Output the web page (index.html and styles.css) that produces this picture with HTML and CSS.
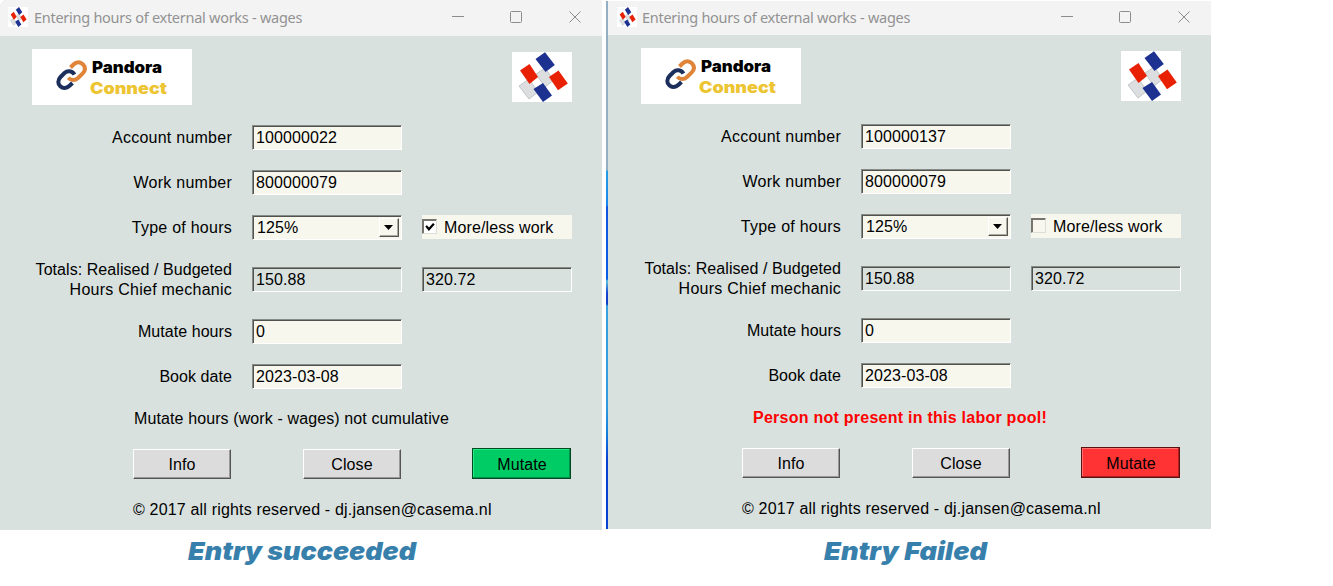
FILE: index.html
```html
<!DOCTYPE html>
<html lang="en">
<head>
<meta charset="utf-8">
<title>Entering hours of external works - wages</title>
<link rel="stylesheet" href="styles.css">
</head>
<body>
<svg class="defs" aria-hidden="true">
  <symbol id="flags" viewBox="0 0 60 50" preserveAspectRatio="none">
    <rect width="60" height="50" fill="#fff"/>
    <g stroke="#b8bcc0" stroke-width=".8">
      <path fill="#dcdee0" d="M7 34L17 27L26 40L17 47Z"/>
      <path fill="#dcdee0" d="M24 22L33 16L42 28L33 35Z"/>
    </g>
    <path fill="#1c3190" d="M23.500 7L33 .3L42.800 13L33.500 20Z"/>
    <path fill="#e82104" d="M8 18.500L17.500 12L26 25L17.500 32Z"/>
    <path fill="#e82104" d="M37 25L46.500 18.500L55.800 31.500L46 38.300Z"/>
    <path fill="#1c3190" d="M21.500 37L31 31L40 43.500L31 50Z"/>
  </symbol>
  <symbol id="chain" viewBox="0 0 50 56">
    <g fill="none" stroke-width="4">
      <path stroke="#df8438" d="M38.500 18.500L41.500 15.500C44.500 12.500 48.500 12.800 51 15.300C53.500 18 53.500 21.500 50.500 24.700L46 29C43 31.700 39 31.800 36.300 28.700" transform="translate(-10)"/>
      <path stroke="#1b2e5c" d="M42.500 25.500C40 21.500 35.500 21.200 32.500 24L28.500 28C25.500 31 25.700 35 28.300 37.300C31 39.800 34.500 39.600 37.500 36.800L40.500 34" transform="translate(-10)"/>
    </g>
  </symbol>
</svg>
<main class="stage">
  <section class="entry">
    <div class="window">
      <header class="titlebar">
        <svg class="app-icon"><use href="#flags"/></svg>
        <span class="title">Entering hours of external works - wages</span>
        <svg class="controls" viewBox="0 0 130 14"><path d="M1 6.500H13M118.500 1.500L129.500 12.500M129.500 1.500L118.500 12.500"/><rect x="59.500" y="1.500" width="11" height="11" rx="1"/></svg>
      </header>
      <form class="body">
        <div class="logos">
          <svg class="pandora" viewBox="0 0 160 56"><use href="#chain" x="10" width="50" height="56"/><text class="brand" x="60" y="24" textLength="70" lengthAdjust="spacingAndGlyphs">Pandora</text><text class="brand gold" x="58" y="45" textLength="77" lengthAdjust="spacingAndGlyphs">Connect</text></svg>
          <svg class="flags"><use href="#flags"/></svg>
        </div>
        <div class="fields">
          <span class="label">Account number</span><span class="field">100000022</span>
          <span class="label">Work number</span><span class="field">800000079</span>
          <span class="label">Type of hours</span>
          <span class="field select">125%<span class="arrow"><svg viewBox="0 0 9 5"><path d="M0 0H9L4.500 5Z"/></svg></span></span>
          <span class="check"><span class="box"><svg viewBox="0 0 9 9"><path d="M1 3.500L3.500 6.500L8 1.500"/></svg></span>More/less work</span>
          <span class="label totals"><span class="tight">Totals: Realised / Budgeted</span><br>Hours Chief mechanic</span><span class="field readonly">150.88</span><span class="field readonly">320.72</span>
          <span class="label tight">Mutate hours</span><span class="field">0</span>
          <span class="label tight">Book date</span><span class="field">2023-03-08</span>
        </div>
        <p class="message">Mutate hours (work - wages) not cumulative</p>
        <div class="buttons"><span class="btn">Info</span><span class="btn">Close</span><span class="btn mutate ok">Mutate</span></div>
        <p class="copyright">© 2017 all rights reserved - dj.jansen@casema.nl</p>
      </form>
    </div>
    <svg class="caption" viewBox="0 0 602 56"><text x="188" y="30" textLength="228" lengthAdjust="spacingAndGlyphs">Entry succeeded</text></svg>
  </section>
  <section class="entry second">
    <div class="window">
      <header class="titlebar">
        <svg class="app-icon"><use href="#flags"/></svg>
        <span class="title">Entering hours of external works - wages</span>
        <svg class="controls" viewBox="0 0 130 14"><path d="M1 6.500H13M118.500 1.500L129.500 12.500M129.500 1.500L118.500 12.500"/><rect x="59.500" y="1.500" width="11" height="11" rx="1"/></svg>
      </header>
      <form class="body">
        <div class="logos">
          <svg class="pandora" viewBox="0 0 160 56"><use href="#chain" x="10" width="50" height="56"/><text class="brand" x="60" y="24" textLength="70" lengthAdjust="spacingAndGlyphs">Pandora</text><text class="brand gold" x="58" y="45" textLength="77" lengthAdjust="spacingAndGlyphs">Connect</text></svg>
          <svg class="flags"><use href="#flags"/></svg>
        </div>
        <div class="fields">
          <span class="label">Account number</span><span class="field">100000137</span>
          <span class="label">Work number</span><span class="field">800000079</span>
          <span class="label">Type of hours</span>
          <span class="field select">125%<span class="arrow"><svg viewBox="0 0 9 5"><path d="M0 0H9L4.500 5Z"/></svg></span></span>
          <span class="check"><span class="box off"></span>More/less work</span>
          <span class="label totals"><span class="tight">Totals: Realised / Budgeted</span><br>Hours Chief mechanic</span><span class="field readonly">150.88</span><span class="field readonly">320.72</span>
          <span class="label tight">Mutate hours</span><span class="field">0</span>
          <span class="label tight">Book date</span><span class="field">2023-03-08</span>
        </div>
        <p class="message error">Person not present in this labor pool!</p>
        <div class="buttons"><span class="btn">Info</span><span class="btn">Close</span><span class="btn mutate fail">Mutate</span></div>
        <p class="copyright">© 2017 all rights reserved - dj.jansen@casema.nl</p>
      </form>
    </div>
    <svg class="caption" viewBox="0 0 602 56"><text x="218" y="31" textLength="163" lengthAdjust="spacingAndGlyphs">Entry Failed</text></svg>
  </section>
</main>
</body>
</html>
```
FILE: styles.css
```css
* { box-sizing: border-box; }
body { margin: 0; background: #fff; font: 16px/20px "Liberation Sans", Arial, sans-serif; color: #000; overflow: hidden; }
p { margin: 0; }
svg { display: block; flex: none; }
.defs { position: absolute; width: 0; height: 0; }
.stage { display: flex; gap: 4px; }
.entry { width: 602px; }
.second { width: 605px; padding-top: 1px; }
.window { height: 530px; background: #d8e1de; border-top-left-radius: 7px; overflow: hidden; }
.second .window {
  height: 528px;
  padding-left: 3px;
  border-radius: 0;
  background: linear-gradient(#94afc4 0 169px, #269ce2 170px, #1688ed 204px, #1155df 206px, #095ce8 278px, #5bc2de 280px, #1744d0 292px, #0c3fc5 303px, #37a2df 305px, #3299df 405px, #1683dd 430px, #0740d2 460px, #0740d2) 0 0 / 2px 100% no-repeat, #d8e1de;
}
.titlebar { height: 36px; padding: 0 21px 2px 8px; display: flex; align-items: center; background: #f3f3f3; }
.second .titlebar { height: 34px; margin-left: -1px; padding-left: 9px; }
.app-icon { width: 20px; height: 20px; }
.title { margin: -1px 0 0 6px; flex: 1; font: 14.5px/20px "Noto Sans", "Open Sans", sans-serif; color: #929292; letter-spacing: -.27px; white-space: nowrap; }
.second .title { margin-left: 5px; }
.controls { width: 130px; height: 14px; fill: none; stroke: #8c8c8c; stroke-width: 1; }
.body { height: 494px; padding: 13px 30px 0 32px; }
.logos { display: flex; justify-content: space-between; align-items: center; }
.pandora { width: 160px; height: 56px; background: #fff; }
.flags { width: 60px; height: 50px; }
.brand { font: 900 16px Inter, sans-serif; fill: #000; }
.gold { fill: #edc431; }
.fields {
  margin-top: 20px;
  display: grid;
  grid-template-columns: 200px 150px 150px;
  grid-template-rows: 25px 25px 25px 39px 25px 25px;
  row-gap: 20px;
  column-gap: 20px;
  align-items: center;
}
.label { grid-column: 1; text-align: right; letter-spacing: .25px; white-space: nowrap; }
.label.tight, .tight { letter-spacing: .06px; }
.totals { align-self: start; }
.field {
  height: 25px;
  padding-left: 3px;
  display: flex;
  align-items: center;
  line-height: 21px;
  letter-spacing: .1px;
  background: #f7f7ee;
  border: 1px solid #888c89;
  border-right-color: #fff;
  border-bottom-color: #fff;
  box-shadow: inset 1px 1px #51514d;
}
.readonly { background: #d8e1de; }
.select { justify-content: space-between; padding: 0 2px 0 4px; }
.arrow {
  width: 20px;
  height: 19px;
  padding: 0 2px 1px 0;
  display: flex;
  align-items: center;
  justify-content: center;
  border: 1px solid #fff;
  border-right-color: #555550;
  border-bottom-color: #555550;
  box-shadow: inset -1px -1px #aaa9a2;
}
.arrow svg { width: 9px; height: 5px; }
.check { height: 24px; padding-top: 2px; align-self: start; display: flex; align-items: center; background: #f7f7ee; letter-spacing: .12px; }
.box {
  width: 15px;
  height: 15px;
  margin: 0 7px 3px 0;
  padding: 2px;
  background: #fff;
  border: 1px solid #77736d;
  border-right-color: #deded9;
  border-bottom-color: #deded9;
  box-shadow: inset 1px 1px #77736d;
}
.box svg { width: 10px; height: 10px; fill: none; stroke: #000; stroke-width: 2; }
.off { background: #f7f7ee; }
.message { margin: 20px 0 0 102px; letter-spacing: .11px; white-space: nowrap; }
.error { margin-left: 112px; color: #f00; font-weight: bold; letter-spacing: .25px; }
.buttons { display: flex; margin: 19px 0 0 101px; height: 32px; }
.btn {
  width: 98px;
  height: 30px;
  margin: 1px 72px 0 0;
  padding-top: 2px;
  display: flex;
  align-items: center;
  justify-content: center;
  background: #dcdcdc;
  border: 1px solid #fff;
  border-right-color: #555;
  border-bottom-color: #555;
  box-shadow: inset -1px -1px #999;
  letter-spacing: .1px;
}
.mutate { width: 99px; height: 31px; margin: 0 0 0 -1px; padding: 3px 0 0 1px; flex: none; }
.ok { background: #00cc66; border-color: #044925; box-shadow: inset -1px -1px #009148, inset 1px 1px #20ec80; }
.fail { background: #ff3333; border-color: #5c1010; box-shadow: inset -1px -1px #b02020, inset 1px 1px #ff7070; }
.copyright { margin: 20px 0 0 101px; letter-spacing: .18px; white-space: nowrap; }
.caption { width: 602px; height: 56px; }
.caption text { font: italic 900 25px Inter, sans-serif; fill: #3780ac; }
```
